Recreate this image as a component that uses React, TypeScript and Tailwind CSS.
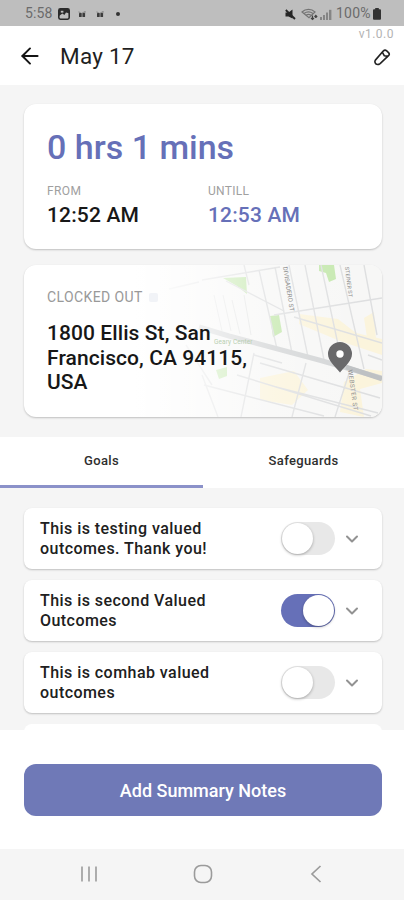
import React from 'react';
import { ArrowLeft, ChevronDown } from 'lucide-react';

interface Goal {
  lines: string[];
  enabled: boolean;
}

const goals: Goal[] = [
  { lines: ['This is testing valued', 'outcomes. Thank you!'], enabled: false },
  { lines: ['This is second Valued', 'Outcomes'], enabled: true },
  { lines: ['This is comhab valued', 'outcomes'], enabled: false },
];

const StatusBar: React.FC = () => (
  <div className="flex h-[26px] shrink-0 items-center justify-between bg-[#bebebe] pl-[25px] pr-[23px] text-[#6b6b6b]">
    <div className="flex items-center">
      <span className="w-[33px] text-[14px] leading-none tracking-[0.1px]">5:58</span>
      {/* Screenshot saved */}
      <svg className="mt-0.5 h-3 w-3" viewBox="0 0 12 12">
        <rect x="0.8" y="0.8" width="10.4" height="10.4" rx="1.6" fill="none" stroke="#2b2b2b" strokeWidth="1.6" />
        <path d="M1 1h10v4.2L8 4.4 6.4 7 4.4 5.6 1 8z" fill="#2b2b2b" />
        <rect x="2.8" y="2.8" width="2.6" height="1.8" fill="#bebebe" />
      </svg>
      {[0, 1].map((i) => (
        <svg key={i} className={i === 0 ? 'ml-2 mt-0.5 h-2 w-2' : 'ml-2.5 mt-0.5 h-2 w-2'} viewBox="0 0 8 8" fill="#3c3c3c">
          <path d="M0.5 1.5L3.5 2.5 7.5 1.2V2.6H0.8z" opacity="0.7" />
          <rect x="1" y="3" width="2.7" height="4" rx="0.6" />
          <rect x="4.4" y="3" width="2.7" height="4" rx="0.6" />
        </svg>
      ))}
      <span className="ml-3 mt-0.5 h-1 w-1 rounded-full bg-[#333]" />
    </div>

    <div className="flex items-center">
      {/* Muted */}
      <svg className="mt-0.5 h-[11px] w-[11px]" viewBox="0 0 11 11" fill="#262626">
        <path d="M0.5 3.6h3L7.5 0.6v9L3.5 7.4H0.5z" />
        <path d="M0.8 1l9.2 9" stroke="#262626" strokeWidth="1.8" />
      </svg>
      {/* Wi-Fi */}
      <svg className="ml-[5px] mt-0.5 h-[13px] w-[17px]" viewBox="0 0 17 13" fill="none" stroke="#747474" strokeWidth="1.2">
        <path d="M1 4C4.6 0.6 10.4 0.6 14 4L8 9.8z" />
        <path d="M3 5.4c3-2 6-2 9 0M5 7.2c1.7-1 3.3-1 5 0" />
        <path d="M11.5 7.5v4M10 10l1.5 1.5L13 10M14.8 10V7.5M13.5 9l1.3-1.5L16.200 9" stroke="#444" />
      </svg>
      {/* Mobile signal */}
      <svg className="ml-[2px] mt-0.5 h-[11px] w-3" viewBox="0 0 12 11" fill="#858585">
        <rect x="0" y="8" width="2" height="3" />
        <rect x="3" y="6" width="2" height="5" />
        <rect x="6" y="3.5" width="2" height="7.5" />
        <rect x="9" y="0.8" width="2.4" height="10.2" />
      </svg>
      <span className="ml-[4px] w-[36px] whitespace-nowrap text-[14px] leading-none tracking-[0.2px]">100%</span>
      {/* Battery */}
      <svg className="ml-[1px] mt-0.5 h-3 w-2" viewBox="0 0 8 12" fill="#333">
        <rect x="2.2" y="0" width="3.6" height="2.2" />
        <rect x="0" y="1.2" width="8" height="10.6" rx="1" />
      </svg>
    </div>
  </div>
);

const Header: React.FC = () => (
  <header className="flex h-[59px] shrink-0 bg-white pl-[17px] pr-[10px]">
    <ArrowLeft className="mt-[17px] h-[26px] w-[26px] text-[#151515]" strokeWidth={1.8} />
    <h1 className="ml-[17px] mt-4 flex-1 text-[22.5px] leading-7 tracking-[0.25px] text-[#1f1f1f]">May 17</h1>
    <div className="flex flex-col items-end">
      <span className="mt-[1px] text-[12px] leading-[14px] tracking-[0.5px] text-[#b3b3b3]">v1.0.0</span>
      <svg className="mr-[3px] mt-[8px] h-[17px] w-[18px]" viewBox="0 0 18 18" fill="none" stroke="#222" strokeWidth="1.7" strokeLinejoin="round">
        <path d="M2.5 15.8C1.4 14.600 1.300 13 2 11.800L10.3 2.200C11.500 1 12.800 1 14 2L15.900 3.800C17 5 16.900 6.100 15.900 7.100L7 15.400C5.500 16.500 3.800 16.800 2.500 15.800z" />
        <path d="M9.300 3.400L11.500 7.200 15.200 7.800" />
      </svg>
    </div>
  </header>
);

const TimeCard: React.FC = () => (
  <section className="h-[145px] shrink-0 rounded-xl bg-white px-[23px] shadow-[0_1px_2px_rgba(0,0,0,0.22)]">
    <h2 className="pt-[22px] text-[34px] font-medium leading-[42px] text-[#6670b8]">0 hrs 1 mins</h2>
    <div className="mt-4 flex">
      <div className="w-[161px]">
        <p className="text-[12px] leading-[14px] tracking-[0.4px] text-[#a0a0a0]">FROM</p>
        <p className="mt-[5px] text-[21px] font-medium leading-6 tracking-[0.15px] text-[#181818]">12:52 AM</p>
      </div>
      <div>
        <p className="text-[12px] leading-[14px] tracking-[0.3px] text-[#a0a0a0]">UNTILL</p>
        <p className="mt-[5px] text-[21px] font-medium leading-6 tracking-[0.15px] text-[#6670b8]">12:53 AM</p>
      </div>
    </div>
  </section>
);

const StreetMap: React.FC = () => (
  <svg className="absolute inset-0 h-full w-full" viewBox="0 0 358 152">
    <defs>
      <linearGradient id="fade" x1="110" y1="0" x2="340" y2="0" gradientUnits="userSpaceOnUse">
        <stop offset="0" stopColor="#fff" />
        <stop offset="0.3" stopColor="#fff" stopOpacity="0.65" />
        <stop offset="0.6" stopColor="#fff" stopOpacity="0.25" />
        <stop offset="1" stopColor="#fff" stopOpacity="0" />
      </linearGradient>
    </defs>
    <rect x="100" width="258" height="152" fill="#f7f7f6" />
    {/* Commercial blocks */}
    <g fill="#fbf4dc">
      <path d="M275 49l39 5 18 14 26 6v16l-42-14-41-17z" />
      <path d="M340 53l10-6 2 28-8 4z" />
      <path d="M236 113l34-7 14 19-16 15-32-5z" />
      <path d="M320 117l22-13 16 2v12l-22 6 4 28-24-5z" />
    </g>
    {/* Parks */}
    <g fill="#c5e8ae">
      <path d="M199 13l23-1 1 17-10-8z" />
      <path d="M295 0h15l2 14-7 3-3-9-7-2z" />
      <path d="M246 51l9-1 3 17-9 5z" />
      <path d="M192 105l11-3v9l-8 3z" />
    </g>
    {/* Streets */}
    <g fill="none" stroke="#dedfe0" strokeWidth="1.4">
      <path d="M145 24l30-7M178 15l78-13M202 16l58 30M250 50l108-17" />
      <path d="M220 0l5 20M235 5l18 79M251 2l17 86M265 0l19 92M281 0l19 95M297 0l21 98M316 0l24 104M340 0l13 70" />
      <path d="M270 52l88 26M236 98l120 35M213 110l134 41M230 90l28 8M180 120l120 31M252 122l102 26M344 90l14 5" />
      <path d="M282 98l-14 54M327 102l-16 50M230 88l-13 64M162 80l26 40M178 110l16 42" />
      <path d="M199 30l8 36M208 35l8 34M190 30l8 36M220 30l7 40" strokeWidth="0.8" />
    </g>
    <path d="M175 62l30 9 90 24 63 18" fill="none" stroke="#d3d5d6" strokeWidth="5" />
    <path d="M322 102l36 12" stroke="#bec1c3" strokeWidth="5" />
    <rect x="100" width="258" height="152" fill="url(#fade)" />
    <g fill="#8c8c8c" fontSize="6.2" letterSpacing="0.1">
      <text transform="translate(259 2) rotate(81)">DIVISADERO ST</text>
      <text transform="translate(321 2) rotate(83)" fontSize="5.5">STEINER ST</text>
      <text transform="translate(324 105) rotate(82)" letterSpacing="0.5">WEBSTER ST</text>
      <text x="190" y="79" fill="#b9d0b2" fontSize="6.5">Geary Center</text>
    </g>
    <path d="M316 107.5C310.5 101 304 95.5 304 89A12 12 0 0 1 328 89C328 95.5 321.5 101 316 107.5z" fill="#69696b" />
    <circle cx="316" cy="89" r="3.7" fill="#fff" />
  </svg>
);

const LocationCard: React.FC = () => (
  <section className="relative mt-4 h-[152px] shrink-0 overflow-hidden rounded-xl bg-white shadow-[0_1px_2px_rgba(0,0,0,0.22)]">
    <StreetMap />
    <div className="relative px-[23px] pt-6">
      <p className="flex items-center text-[14px] leading-4 tracking-[0.4px] text-[#999]">
        CLOCKED OUT <span className="ml-[6px] h-[9px] w-[9px] rounded-xs bg-[#f1f3f7]" />
      </p>
      <p className="mt-4 text-[21px] font-medium leading-[24.5px] tracking-[0.08px] text-[#171717]">
        1800 Ellis St, San
        <br />
        Francisco, CA 94115,
        <br />
        USA
      </p>
    </div>
  </section>
);

const Toggle: React.FC<{ enabled: boolean }> = ({ enabled }) => (
  <div
    className={
      enabled
        ? 'flex h-[33px] w-[54px] items-center justify-end rounded-full bg-[#6670b8] px-px'
        : 'flex h-[33px] w-[54px] items-center rounded-full bg-[#e8e8e8] px-px'
    }
  >
    <div className="h-[31px] w-[31px] rounded-full bg-white shadow-[0_1px_3px_rgba(0,0,0,0.3)]" />
  </div>
);

const GoalRow: React.FC<{ goal: Goal }> = ({ goal }) => (
  <div className="flex h-[61px] shrink-0 items-center rounded-lg bg-white pl-4 pr-5 shadow-[0_1px_2px_rgba(0,0,0,0.22)]">
    <p className="flex-1 text-[16px] font-medium leading-5 tracking-[0.45px] text-[#202020]">
      {goal.lines[0]}
      <br />
      {goal.lines[1]}
    </p>
    <Toggle enabled={goal.enabled} />
    <ChevronDown className="ml-[7px] h-5 w-5 text-[#929292]" strokeWidth={2.4} />
  </div>
);

const App: React.FC = () => {
  return (
    <div className="flex h-[900px] w-[404px] flex-col overflow-hidden bg-[#f5f5f5] font-[Roboto,sans-serif]">
      <StatusBar />
      <Header />

      <main className="flex h-[645px] shrink-0 flex-col overflow-hidden">
        <div className="flex flex-col pl-6 pr-[22px] pt-[19px]">
          <TimeCard />
          <LocationCard />
        </div>

        {/* Tabs */}
        <div className="mt-5 flex h-[51px] shrink-0 bg-white text-[13px] font-medium tracking-[0.35px] text-[#2e2e2e]">
          <div className="flex w-[203px] items-center justify-center border-b-[3px] border-[#8b91c9]">Goals</div>
          <div className="flex flex-1 items-center justify-center border-b-[3px] border-white">Safeguards</div>
        </div>

        <div className="flex flex-col gap-[11px] pl-6 pr-[22px] pt-5">
          {goals.map((goal) => (
            <GoalRow key={goal.lines[0]} goal={goal} />
          ))}
          <div className="h-[61px] shrink-0 rounded-lg bg-white" />
        </div>
      </main>

      {/* Footer action */}
      <div className="h-[119px] shrink-0 bg-white pl-6 pr-[22px] pt-[34px]">
        <button className="h-[52px] w-full rounded-xl bg-[#6f79b7] text-[18px] font-medium text-white">
          Add Summary Notes
        </button>
      </div>

      {/* System navigation */}
      <nav className="flex flex-1 items-center justify-between pb-0.5 pl-[80px] pr-[79px] text-[#9b9b9b]">
        <svg className="h-[18px] w-[18px]" viewBox="0 0 18 18" stroke="currentColor" strokeWidth="1.6">
          <path d="M2 1.5v15M9 1.5v15M16 1.5v15" />
        </svg>
        <svg className="h-5 w-5" viewBox="0 0 20 20" fill="none" stroke="currentColor" strokeWidth="1.6">
          <rect x="1.5" y="1.5" width="17" height="17" rx="6.5" />
        </svg>
        <svg className="h-[18px] w-[18px]" viewBox="0 0 18 18" fill="none" stroke="currentColor" strokeWidth="1.7">
          <path d="M13.5 1L5 9l8.5 8" />
        </svg>
      </nav>
    </div>
  );
};

export default App;
